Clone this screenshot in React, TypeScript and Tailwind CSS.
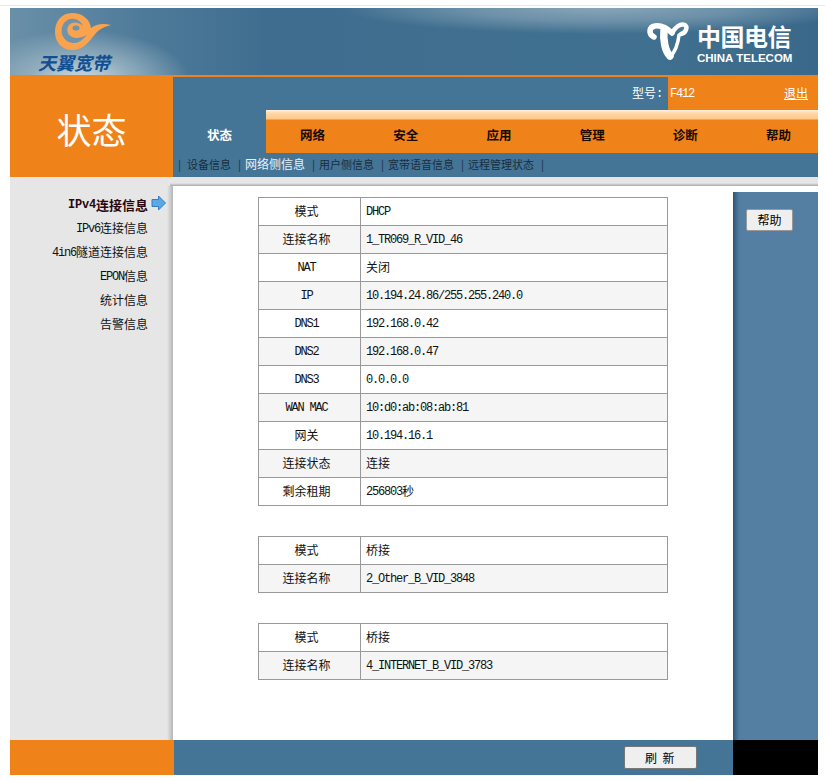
import React from "react";

function Mixed({ text, active = false }: { text: string; active?: boolean }) {
  const parts = text.match(/[\x00-\x7f]+|[^\x00-\x7f]+/g) ?? [];
  return (
    <span className="inline-flex items-center leading-none">
      {parts.map((p, i) =>
        /^[\x00-\x7f]/.test(p) ? (
          <span key={i} className={`font-['Liberation_Mono',monospace] text-[12px] whitespace-pre ${active ? "tracking-[-0.2px]" : "tracking-[-1.2px]"}`}>{p}</span>
        ) : (
          <span key={i} className={`font-['Noto_Sans_CJK_SC',sans-serif] -translate-y-[1px] ${active ? "text-[13px]" : "text-[12px]"}`}>{p}</span>
        )
      )}
    </span>
  );
}

function InfoTable({ rows }: { rows: [string, string][] }) {
  return (
    <div className="w-[410px] border-t border-l border-[#999999]">
      {rows.map(([k, v], i) => (
        <div key={k} className={`flex h-[28px] border-b border-r border-[#999999] text-[#111] ${i % 2 ? "bg-[#f5f5f5]" : "bg-white"}`}>
          <div className="w-[102px] shrink-0 flex items-center justify-center pr-[6px] border-r border-[#999999]"><Mixed text={k} /></div>
          <div className="flex-1 flex items-center pl-[5px]"><Mixed text={v} /></div>
        </div>
      ))}
    </div>
  );
}

const tabs = ["状态", "网络", "安全", "应用", "管理", "诊断", "帮助"];
const subs = ["设备信息", "网络侧信息", "用户侧信息", "宽带语音信息", "远程管理状态"];
const side = ["IPv4连接信息", "IPv6连接信息", "4in6隧道连接信息", "EPON信息", "统计信息", "告警信息"];

export default function App() {
  return (
    <div className="w-[825px] h-[781px] bg-white overflow-hidden pt-[5px] font-['Noto_Sans_CJK_SC',sans-serif]">
      <div className="h-[1px] bg-[#e8e8e8]" />
      <div className="h-[2px] bg-white" />
      <div className="ml-[10px] w-[808px]">
        {/* banner */}
        <div className="relative h-[67px] overflow-hidden bg-[radial-gradient(ellipse_110px_50px_at_70px_72px,#d0dce1_0%,#92aebe_45%,transparent_100%),radial-gradient(ellipse_260px_26px_at_590px_0px,#86a5ba_0%,#6d91a9_50%,transparent_100%),linear-gradient(to_right,#6a90a8_0,#4f7b9a_130px,#3f6d8f_260px,#40708f_640px,#3a688a_808px),linear-gradient(#3f6d8f,#3f6d8f)]">
          <svg className="absolute left-[20px] top-0" width="90" height="50" viewBox="0 0 90 50">
            <path d="M42 5C31 5 25 14 25 24C25 35 33 43 44 42C55 41 60 32 66 25C70 21 74 19 81 17C73 15 66 16 61 20C60 11 52 5 42 5Z" fill="#f9a34e" />
            <path d="M53 18C50 10 39 8 34 15C28 24 34 36 46 35C50 34 53 31 57 27C51 30 46 31 42 29C37 27 36 21 39 17C43 13 49 14 53 18Z" fill="#6f93aa" />
            <ellipse cx="46" cy="20" rx="3.5" ry="2.5" fill="#6f93aa" />
          </svg>
          <span className="absolute left-[28px] top-[43px] text-[18px] leading-[22px] font-bold italic text-[#0f4f92] whitespace-nowrap">天翼宽带</span>
          <svg className="absolute left-[630px] top-[6px]" width="60" height="54" viewBox="0 0 60 54" fill="none" stroke="#ffffff" strokeLinecap="round">
            <path d="M14 23C8 20 9 13 15 12C22 11 28 15 32 19" strokeWidth="5.5" />
            <path d="M32 19C35 14 40 9 45 11C48 13 46 19 41 20" strokeWidth="4.5" />
            <path d="M24 16C23 26 25 37 30 42" strokeWidth="7.5" />
            <path d="M30 43C35 38 38 30 39 21" strokeWidth="3.5" />
          </svg>
          <div className="absolute left-[687px] top-[13px] text-white text-[24px] leading-[30px] font-bold tracking-[-0.5px] whitespace-nowrap">中国电信</div>
          <div className="absolute left-[687px] top-[43px] text-white text-[11.5px] leading-[14px] font-bold font-['Liberation_Sans',sans-serif] whitespace-nowrap">CHINA TELECOM</div>
        </div>

        {/* header */}
        <div className="flex h-[102px] bg-[#f0821a]">
          <div className="w-[163px] shrink-0 flex items-center justify-center pt-[4px] text-white text-[35px] leading-none font-normal">状态</div>
          <div className="flex-1 min-w-0 flex flex-col pt-[2px]">
            <div className="h-[33px] flex items-center bg-[linear-gradient(to_right,#457596_0,#457596_495px,#f0821a_495px)] text-white">
              <div className="w-[495px] pr-[6px] flex justify-end"><Mixed text="型号:" /></div>
              <div className="pl-[2px] pt-[1px] flex-1 flex"><Mixed text="F412" /></div>
              <div className="pr-[10px] pb-[2px] underline text-[12px]">退出</div>
            </div>
            <div className="flex h-[43px] bg-[#457596]">
              <div className="w-[93px] shrink-0 flex items-center justify-center pt-[8px] text-white font-bold text-[12.5px]">{tabs[0]}</div>
              <div className="flex-1 min-w-0 overflow-hidden flex bg-[linear-gradient(to_bottom,#fff3e2_0,#ffd9a8_3px,#ffc78a_9px,#f0821a_10px)]">
                {tabs.slice(1).map((t) => (
                  <div key={t} className="w-[93.2px] shrink-0 flex items-center justify-center pt-[8px] text-[#180a00] font-bold text-[12.5px]">{t}</div>
                ))}
              </div>
            </div>
            <div className="h-[24px] flex items-center bg-[#457596] pl-[5px] pb-[2px] text-[11px] text-[#172e3e] whitespace-nowrap">
              <span className="w-[6px]">|</span>
              {subs.map((s, i) => (
                <React.Fragment key={s}>
                  <span className={`${i === 0 ? "ml-[3px]" : "ml-[4px]"} ${i === 1 ? "text-[#e6f2fa] text-[12px]" : ""}`}>{s}</span>
                  <span className="ml-[7px] w-[3px]">|</span>
                </React.Fragment>
              ))}
            </div>
          </div>
        </div>

        {/* strip */}
        <div className="flex h-[9px] bg-[#e6e6e6]">
          <div className="w-[160px] shrink-0" />
          <div className="flex-1 bg-[linear-gradient(to_bottom,#e6e6e6_0,#e6e6e6_6px,#a8a8a8_9px)]" />
        </div>

        {/* body */}
        <div className="flex h-[554px]">
          <div className="w-[163px] shrink-0 bg-[linear-gradient(to_right,#e6e6e6_0,#e6e6e6_157px,#b5b5b5_163px)] pt-[7px]">
            {side.map((s, i) => (
              <div key={s} className={`relative h-[24px] flex items-center justify-end pr-[25px] ${i === 0 ? "font-bold text-[#2a0610]" : "text-[#111]"}`}>
                <Mixed text={s} active={i === 0} />
                {i === 0 && (
                  <svg className="absolute left-[141px] top-[2px]" width="15" height="16" viewBox="0 0 15 16">
                    <path d="M1 4.5H7.5V1L14.5 8L7.5 15V11.5H1Z" fill="#58a9e6" stroke="#2f7fc2" strokeWidth="1" />
                  </svg>
                )}
              </div>
            ))}
          </div>
          <div className="w-[560px] shrink-0 flex flex-col items-center gap-[30px] pt-[11px] pl-[20px]">
            <InfoTable
              rows={[
                ["模式", "DHCP"],
                ["连接名称", "1_TR069_R_VID_46"],
                ["NAT", "关闭"],
                ["IP", "10.194.24.86/255.255.240.0"],
                ["DNS1", "192.168.0.42"],
                ["DNS2", "192.168.0.47"],
                ["DNS3", "0.0.0.0"],
                ["WAN MAC", "10:d0:ab:08:ab:81"],
                ["网关", "10.194.16.1"],
                ["连接状态", "连接"],
                ["剩余租期", "256803秒"],
              ]}
            />
            <InfoTable rows={[["模式", "桥接"], ["连接名称", "2_Other_B_VID_3848"]]} />
            <InfoTable rows={[["模式", "桥接"], ["连接名称", "4_INTERNET_B_VID_3783"]]} />
          </div>
          <div className="flex-1 mt-[6px] pl-[13px] pt-[14px] bg-[linear-gradient(to_right,#2f5570_0,#527da0_6px,#547fa3_8px)]">
            <button className="w-[47px] h-[22px] bg-[#efefef] border border-[#999] rounded-[2px] text-[12px] text-black">帮助</button>
          </div>
        </div>

        {/* footer */}
        <div className="flex h-[35px]">
          <div className="w-[164px] bg-[#f0821a]" />
          <div className="w-[559px] bg-[#457596] flex items-center justify-end pr-[36px]">
            <button className="w-[73px] h-[23px] bg-[#efefef] border border-[#777] rounded-[2px] text-[12px] text-black tracking-[1.5px]">刷 新</button>
          </div>
          <div className="flex-1 bg-black" />
        </div>
      </div>
    </div>
  );
}
